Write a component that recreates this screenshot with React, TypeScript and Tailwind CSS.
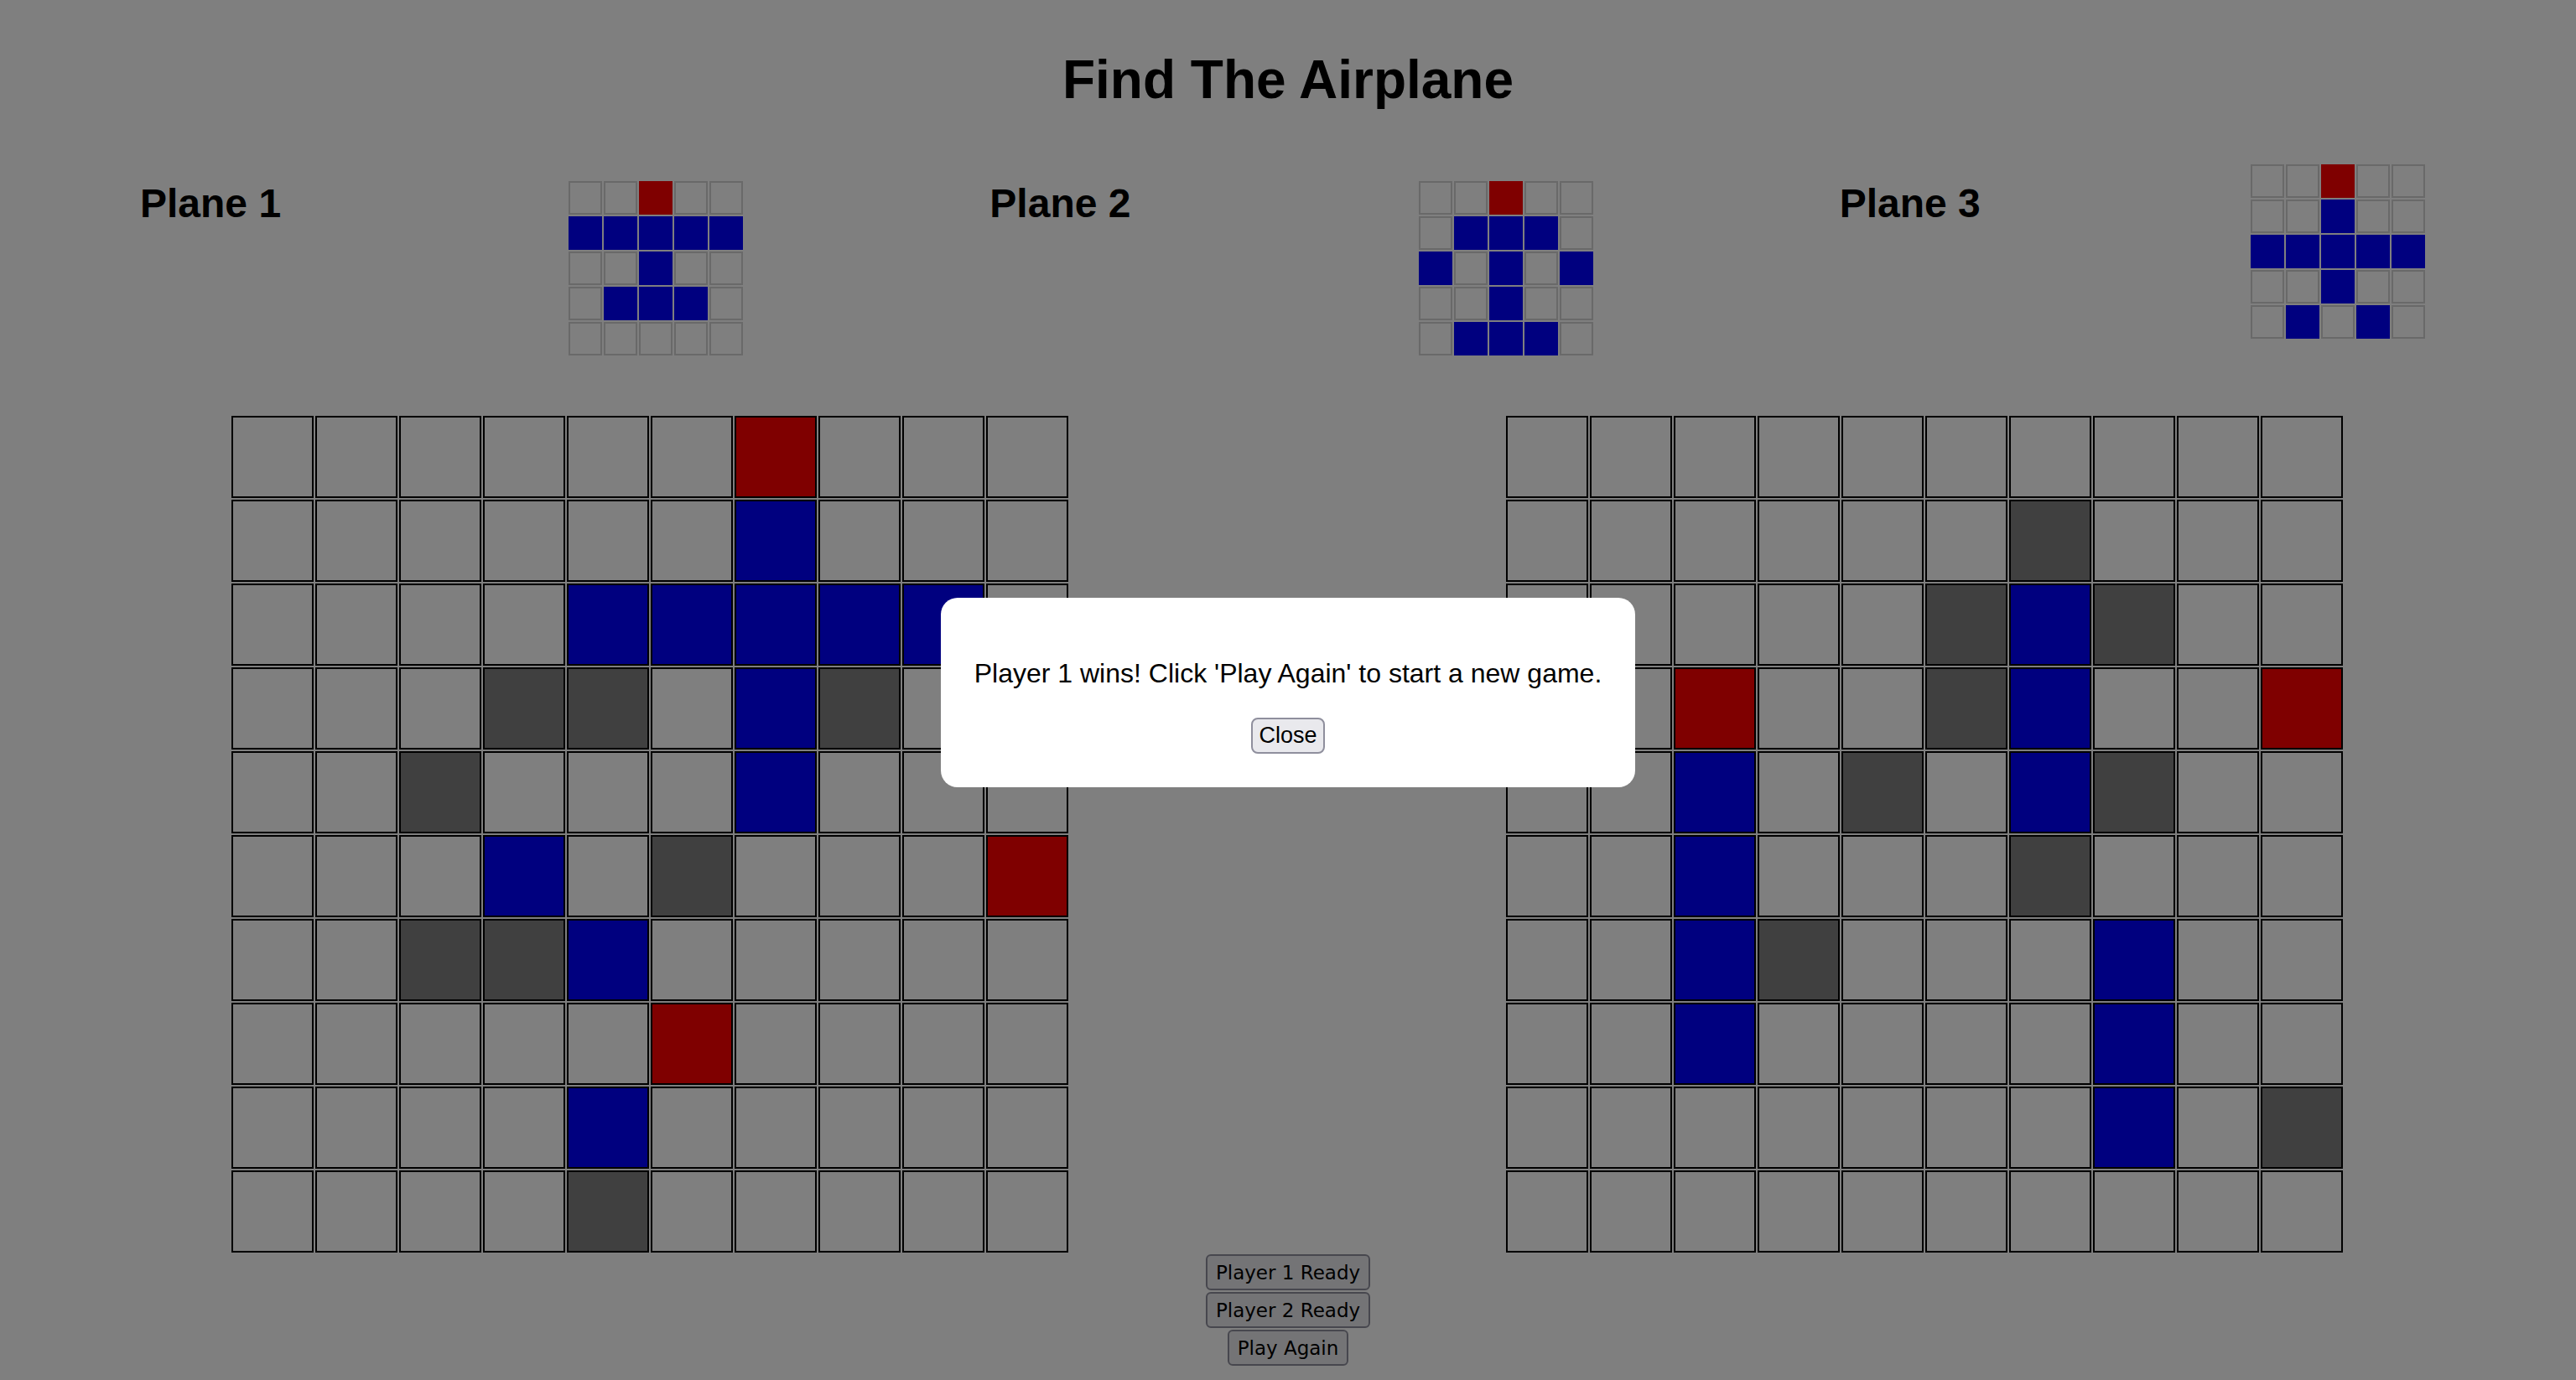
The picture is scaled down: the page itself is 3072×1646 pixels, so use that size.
import { FC } from 'react';

type Cell = '.' | 'b' | 'r' | 'd';

const leftBoard: string[] = [
  '......r...',
  '......b...',
  '....bbbbb.',
  '...dd.bd..',
  '..d...b...',
  '...b.d...r',
  '..ddb.....',
  '.....r....',
  '....b.....',
  '....d.....',
];

const rightBoard: string[] = [
  '..........',
  '......d...',
  '.....dbd..',
  '..r..db..r',
  '..b.d.bd..',
  '..b...d...',
  '..bd...b..',
  '..b....b..',
  '.......b.d',
  '..........',
];

const planes = [
  {
    name: 'Plane 1',
    shape: ['..r..', 'bbbbb', '..b..', '.bbb.', '.....'],
    colClass: 'pl-[151px] pr-[143px]',
    gridClass: 'mt-[20px]',
  },
  {
    name: 'Plane 2',
    shape: ['..r..', '.bbb.', 'b.b.b', '..b..', '.bbb.'],
    colClass: 'pl-[151px] pr-[143px]',
    gridClass: 'mt-[20px]',
  },
  {
    name: 'Plane 3',
    shape: ['..r..', '..b..', 'bbbbb', '..b..', '.b.b.'],
    colClass: 'pl-[151px] pr-[164px]',
    gridClass: 'mt-0',
  },
];

const boardCell: Record<Cell, string> = {
  '.': 'bg-white',
  b: 'bg-[#0000ff]',
  r: 'bg-[#ff0000]',
  d: 'bg-[#808080]',
};

const miniCell: Record<Cell, string> = {
  '.': 'bg-white border-[#d3d3d3]',
  b: 'bg-[#0000ff] border-[#0000ff]',
  r: 'bg-[#ff0000] border-[#ff0000]',
  d: 'bg-[#808080] border-[#808080]',
};

const MiniGrid: FC<{ shape: string[]; className: string }> = ({ shape, className }) => (
  <div className={`grid grid-cols-5 gap-[2px] ${className}`}>
    {shape.flatMap((row, y) =>
      row.split('').map((c, x) => (
        <div key={`${y}-${x}`} className={`w-[40px] h-[40px] border-2 ${miniCell[c as Cell]}`} />
      )),
    )}
  </div>
);

const Board: FC<{ rows: string[] }> = ({ rows }) => (
  <div className="grid grid-cols-10">
    {rows.flatMap((row, y) =>
      row.split('').map((c, x) => (
        <div key={`${y}-${x}`} className={`m-[1px] w-[98px] h-[98px] border-2 border-black ${boardCell[c as Cell]}`} />
      )),
    )}
  </div>
);

const GameButton: FC<{ label: string }> = ({ label }) => (
  <button className="h-[43px] px-[10px] pt-[2px] border-2 border-[#8f8f9d] bg-[#e9e9ed] rounded-[6px] text-[23px] font-['DejaVu_Sans',Tahoma,sans-serif] text-black leading-none">
    {label}
  </button>
);

export default function App() {
  return (
    <div className="relative min-h-screen bg-white p-[16px] font-['Liberation_Sans',Arial,sans-serif] text-black">
      <h1 className="mt-[47px] text-center text-[64px] leading-[64px] font-bold">Find The Airplane</h1>

      <div className="mt-[69px] grid grid-cols-3">
        {planes.map((p) => (
          <div key={p.name} className={`flex items-start justify-between ${p.colClass}`}>
            <h2 className="mt-[23px] text-[48px] leading-[48px] font-bold">{p.name}</h2>
            <MiniGrid shape={p.shape} className={p.gridClass} />
          </div>
        ))}
      </div>

      <div className="mt-[71px] flex">
        <div className="flex-1 flex justify-center pr-[2px]">
          <Board rows={leftBoard} />
        </div>
        <div className="flex-1 flex justify-center pr-[2px]">
          <Board rows={rightBoard} />
        </div>
      </div>

      <div className="mt-[1px] flex flex-col items-center gap-[2px]">
        <GameButton label="Player 1 Ready" />
        <GameButton label="Player 2 Ready" />
        <GameButton label="Play Again" />
      </div>

      <div className="fixed inset-0 bg-black/50 flex items-center justify-center pt-[6px]">
        <div className="bg-white rounded-[20px] px-[40px] pt-[40px] pb-[40px] text-center">
          <p className="mt-[32px] mb-[34px] text-[32px] leading-[37px]">
            Player 1 wins! Click 'Play Again' to start a new game.
          </p>
          <button className="h-[43px] px-[7px] border-2 border-[#8f8f9d] bg-[#e9e9ed] rounded-[8px] text-[27px] leading-none text-black">
            Close
          </button>
        </div>
      </div>
    </div>
  );
}
